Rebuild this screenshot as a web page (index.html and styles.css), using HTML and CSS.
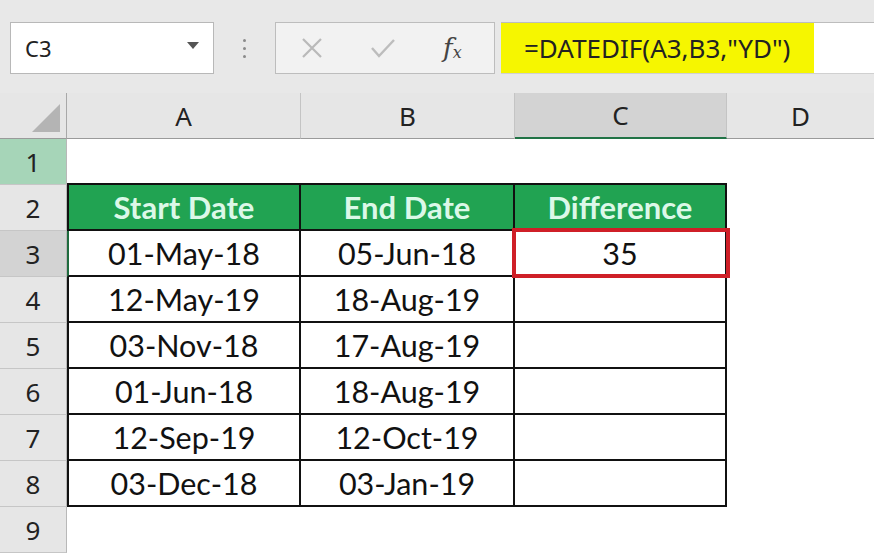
FILE: index.html
```html
<!DOCTYPE html>
<html>
<head>
<meta charset="utf-8">
<link rel="stylesheet" href="styles.css">
</head>
<body>
<div class="app">
  <div class="toolbar">
    <div class="namebox">
      <span class="name">C3</span>
      <svg class="dd" width="12" height="7" viewBox="0 0 12 7"><path d="M0 0H12L6 7Z" fill="#555"/></svg>
    </div>
    <div class="dots"><span></span><span></span><span></span></div>
    <div class="fbuttons">
      <svg class="ic" width="22" height="20" viewBox="0 0 22 20"><path d="M2 1L20 19M20 1L2 19" stroke="#b9b9b9" stroke-width="2.2" fill="none"/></svg>
      <svg class="ic" width="26" height="20" viewBox="0 0 26 20"><path d="M2 10L9 18L24 2" stroke="#bdbdbd" stroke-width="2.4" fill="none"/></svg>
      <span class="fx"><i>f</i><sub>x</sub></span>
    </div>
    <div class="formula">
      <div class="ftext">=DATEDIF(A3,B3,"YD")</div>
    </div>
  </div>
  <div class="sheet">
    <div class="ch corner"><span class="tri"></span></div>
    <div class="ch">A</div>
    <div class="ch">B</div>
    <div class="ch sel">C</div>
    <div class="ch last">D</div>

    <div class="rh r1">1</div>
    <div class="c top"></div><div class="c top"></div><div class="c top"></div><div class="c"></div>

    <div class="rh">2</div>
    <div class="c t hd first">Start Date</div><div class="c t hd">End Date</div><div class="c t hd">Difference</div><div class="c"></div>

    <div class="rh sel">3</div>
    <div class="c t first active">01-May-18</div><div class="c t">05-Jun-18</div><div class="c t cur">35<span class="redbox"></span></div><div class="c"></div>

    <div class="rh">4</div>
    <div class="c t first">12-May-19</div><div class="c t">18-Aug-19</div><div class="c t"></div><div class="c"></div>

    <div class="rh">5</div>
    <div class="c t first">03-Nov-18</div><div class="c t">17-Aug-19</div><div class="c t"></div><div class="c"></div>

    <div class="rh">6</div>
    <div class="c t first">01-Jun-18</div><div class="c t">18-Aug-19</div><div class="c t"></div><div class="c"></div>

    <div class="rh">7</div>
    <div class="c t first">12-Sep-19</div><div class="c t">12-Oct-19</div><div class="c t"></div><div class="c"></div>

    <div class="rh">8</div>
    <div class="c t first">03-Dec-18</div><div class="c t">03-Jan-19</div><div class="c t"></div><div class="c"></div>

    <div class="rh">9</div>
    <div class="c"></div><div class="c"></div><div class="c"></div><div class="c"></div>
  </div>
</div>
</body>
</html>
```
FILE: styles.css
```css
* { box-sizing: border-box; }
html, body { margin: 0; padding: 0; background: #fff; }
body { width: 874px; height: 554px; overflow: hidden; font-family: "Open Sans", "Noto Sans", sans-serif; }

.toolbar {
  height: 93px;
  background: #e8e8e8;
  display: flex;
  align-items: flex-start;
  padding: 22px 0 0 10px;
}
.namebox {
  width: 204px;
  height: 52px;
  background: #fff;
  border: 1px solid #b8b8b8;
  display: flex;
  align-items: center;
  justify-content: space-between;
  padding: 0 14px 0 14px;
}
.name { font-size: 22px; color: #222; font-family: "Noto Sans", sans-serif; }
.dd { margin-top: -6px; }
.dots {
  width: 61px;
  height: 52px;
  display: flex;
  flex-direction: column;
  align-items: center;
  justify-content: center;
  gap: 5px;
}
.dots span { width: 3px; height: 3px; border-radius: 50%; background: #8a8a8a; }
.fbuttons {
  width: 220px;
  height: 52px;
  background: #f2f2f2;
  border: 1px solid #bdbdbd;
  display: flex;
  align-items: center;
  padding: 0 0 0 25px;
  gap: 47px;
}
.fx { font-family: "DejaVu Serif", "Liberation Serif", serif; font-size: 26px; color: #444; line-height: 1; }
.fx sub { font-size: 16px; font-style: italic; vertical-align: -1px; }
.formula {
  flex: 1;
  height: 52px;
  margin-left: 6px;
  background: #fff;
  border-top: 1px solid #bdbdbd;
  border-bottom: 1px solid #d0d0d0;
  display: flex;
}
.ftext {
  width: 313px;
  height: 100%;
  background: #f6f600;
  font-family: "Noto Sans", sans-serif;
  font-size: 26px;
  color: #222;
  display: flex;
  align-items: center;
  padding-left: 23px;
}

.sheet {
  display: grid;
  grid-template-columns: 67px 234px 214px 212px 147px;
  grid-auto-rows: 46px;
}
.ch {
  background: #e6e6e6;
  border-right: 1px solid #c4c4c4;
  border-bottom: 1px solid #9a9a9a;
  display: flex;
  align-items: center;
  justify-content: center;
  font-family: "Noto Sans", sans-serif;
  font-size: 26px;
  color: #222;
}
.ch.corner { border-right: 1px solid #a8a8a8; justify-content: flex-end; align-items: flex-end; padding: 0 6px 6px 0; }
.tri { width: 0; height: 0; border-left: 28px solid transparent; border-bottom: 28px solid #b4b4b4; }
.ch.sel { background: #d3d3d3; border-bottom: 2px solid #217346; }
.ch.last { border-right: none; }

.rh {
  background: #e6e6e6;
  border-right: 1px solid #b8b8b8;
  border-bottom: 1px solid #c6c6c6;
  display: flex;
  align-items: center;
  justify-content: center;
  font-family: "Noto Sans", sans-serif;
  font-size: 26px;
  color: #222;
}
.rh.r1 { background: #a6d5b8; }
.rh.sel { background: #d3d3d3; }

.c {
  background: #fff;
  display: flex;
  align-items: center;
  justify-content: center;
  font-family: "Lato", sans-serif;
  font-size: 30.5px;
  color: #111;
}
.c.top { border-bottom: 2px solid #111; }
.c.t { border-right: 2px solid #111; border-bottom: 2px solid #111; }
.c.first { border-left: 2px solid #111; }
.c.active { border-left-color: #1f6b3e; }
.c.hd { background: #21a352; color: #dcf8e8; font-weight: 700; font-size: 31px; }
.c.cur { position: relative; }
.redbox {
  position: absolute;
  left: -3px;
  top: -3px;
  right: -5px;
  bottom: -3px;
  border: 4px solid #cf1f27;
}
```
